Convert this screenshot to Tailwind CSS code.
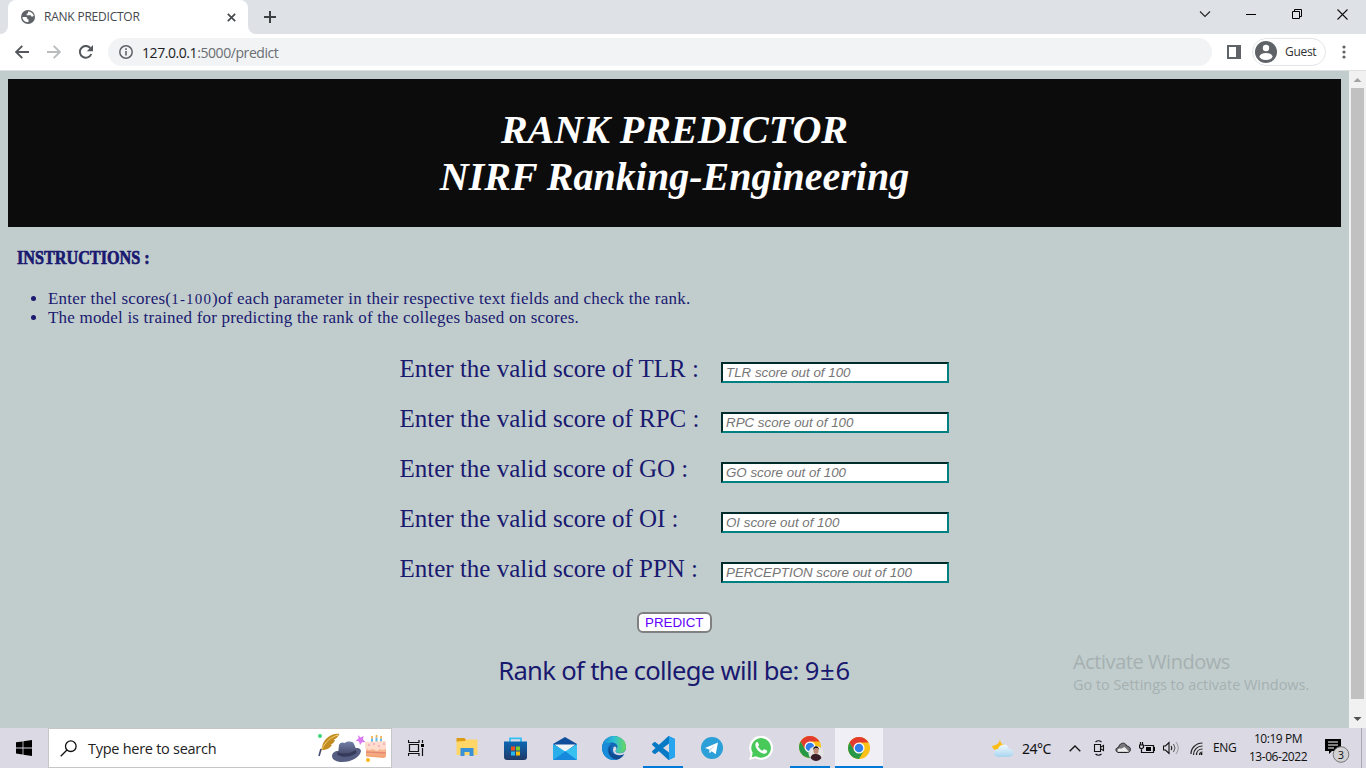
<!DOCTYPE html>
<html lang="en">
<head>
<meta charset="utf-8">
<title>RANK PREDICTOR</title>
<script src="https://cdn.jsdelivr.net/npm/@tailwindcss/browser@4"></script>
</head>
<body class="w-[1366px] h-[768px] overflow-hidden flex flex-col bg-[#c1cdcd] font-['Open_Sans','Noto_Sans',sans-serif] whitespace-nowrap">

<!-- Tab strip -->
<header class="h-[34px] bg-[#dee1e6] flex shrink-0">
  <div class="w-2 bg-white"><div class="size-full bg-[#dee1e6] rounded-br-lg"></div></div>
  <div class="w-[240px] bg-white rounded-t-lg flex items-center pl-[13px] pr-[12px]">
    <svg class="size-[14px] shrink-0" viewBox="0 0 14 14"><circle cx="7" cy="7" r="7" fill="#5f6368"/><path d="M1.500 7h3c1 0 1.800.7 1.800 1.600v.7h1.200v2.800C4 12.500 1.300 10 1.500 7Z M7 1.500v1c0 .9-.7 1.400-1.400 1.400v1.300h3.600c.8 0 1 .5 1 1.300h1.200c.9 0 1.300-.5 1.300-1C12.200 3.300 9.800 1.500 7 1.500Z M7 6.200h2.400" fill="#fff"/></svg>
    <span class="ml-[9px] text-[12px] tracking-[-0.22px] text-[#45494d]">RANK PREDICTOR</span>
    <svg class="size-[9px] ml-auto" viewBox="0 0 9 9"><path d="M.8.8l7.400 7.400M8.200.8L.8 8.200" stroke="#45494d" stroke-width="1.700"/></svg>
  </div>
  <div class="w-2 bg-white"><div class="size-full bg-[#dee1e6] rounded-bl-lg"></div></div>
  <svg class="w-3 h-3 ml-[8px] mt-[11px]" viewBox="0 0 12 12"><path d="M6 0v12M0 6h12" stroke="#3c4043" stroke-width="2"/></svg>
  <div class="ml-auto flex items-center pb-[6px] pr-[18px]">
    <svg class="w-[12px] h-[8px]" viewBox="0 0 12 8"><path d="M1 1.500l5 5 5-5" fill="none" stroke="#222" stroke-width="1.100"/></svg>
    <div class="w-[10px] h-px bg-black ml-[35px] mt-[1px]"></div>
    <svg class="size-[11px] ml-[36px]" viewBox="0 0 11 11"><path d="M.5 2.500h7v7h-7zM2.500 2.500v-2h7v7h-2" fill="none" stroke="#000"/></svg>
    <svg class="size-[11px] ml-[34px]" viewBox="0 0 11 11"><path d="M.5.5l10 10M10.500.5l-10 10" stroke="#111" stroke-width="1.100"/></svg>
  </div>
</header>

<!-- Toolbar -->
<div class="h-[37px] bg-white border-b border-[#dcdedf] flex items-center shrink-0 pl-[15px] pr-[20px]">
  <svg class="w-[14px] h-[14px]" viewBox="0 0 14 14"><path d="M14 7H1.500M7.300.8L1.100 7l6.200 6.200" fill="none" stroke="#54585d" stroke-width="1.900"/></svg>
  <svg class="w-[14px] h-[14px] ml-[18px]" viewBox="0 0 14 14"><path d="M0 7h12.500M6.700.8L12.900 7l-6.200 6.200" fill="none" stroke="#babcbe" stroke-width="1.900"/></svg>
  <svg class="size-[14px] ml-[18px]" viewBox="0 0 14 14"><path d="M12.300 9A5.900 5.900 0 1 1 11.300 3" fill="none" stroke="#54585d" stroke-width="2"/><path d="M14 0v6.200H7.800z" fill="#54585d"/></svg>
  <div class="ml-[15px] w-[1104px] h-7 rounded-full bg-[#f1f3f4] flex items-center pl-[11px]">
    <svg class="size-[14px]" viewBox="0 0 14 14"><circle cx="7" cy="7" r="6.200" fill="none" stroke="#5f6368" stroke-width="1.500"/><path d="M6.200 6h1.600v4.500H6.200zM6.200 3.300h1.600v1.600H6.200z" fill="#5f6368"/></svg>
    <span class="ml-[9px] text-[14px] tracking-[-0.43px] text-[#6a6e73]"><span class="text-[#202124]">127.0.0.1</span>:5000/predict</span>
  </div>
  <svg class="w-[14px] h-[14px] ml-[15px]" viewBox="0 0 14 14"><path fill-rule="evenodd" d="M0 0h14v14H0zM2 2v10h7V2z" fill="#5f6368"/></svg>
  <div class="ml-[11px] w-[74px] h-7 rounded-full border border-[#e2e4e7] flex items-center pl-[2px]">
    <svg class="size-[22px]" viewBox="0 0 22 22"><circle cx="11" cy="11" r="11" fill="#5f6368"/><circle cx="11" cy="7" r="3.200" fill="#fff"/><ellipse cx="11" cy="15.500" rx="6.500" ry="3.500" fill="#fff"/></svg>
    <span class="ml-[8px] text-[12px] tracking-[-0.3px] text-[#303134]">Guest</span>
  </div>
  <svg class="w-[4px] h-[14px] ml-auto" viewBox="0 0 4 14"><g fill="#5f6368"><circle cx="2" cy="2" r="1.600"/><circle cx="2" cy="7" r="1.600"/><circle cx="2" cy="12" r="1.600"/></g></svg>
</div>

<!-- Page and scrollbar -->
<div class="h-[657px] flex shrink-0">
  <main class="w-[1349px] pt-2 px-2 text-[#191970] relative">
    <h1 class="h-[148px] bg-[#0c0c0c] text-white text-center font-['Liberation_Serif',serif] font-bold italic text-[40px] leading-[47px] pt-[27px]">RANK PREDICTOR<br>NIRF Ranking-Engineering</h1>
    <h3 class="mt-[19px] ml-[9px] h-[25px] leading-[24px] font-['Liberation_Serif',serif] font-bold text-[19.500px] origin-left scale-x-[0.83] [-webkit-text-stroke:0.7px_#191970]">INSTRUCTIONS :</h3>
    <ul class="mt-[18px] pl-[40px] list-disc font-['Liberation_Serif',serif] text-[17px] leading-[19px]">
      <li class="tracking-[0.24px]">Enter thel scores(<span class="text-[15px] tracking-[1.150px]">1-100</span>)of each parameter in their respective text fields and check the rank.</li>
      <li class="tracking-[0.2px] -mt-px">The model is trained for predicting the rank of the colleges based on scores.</li>
    </ul>
    <form class="mt-[17px] ml-[391.500px] w-[549.500px] font-['Liberation_Serif',serif] text-[25px]">
      <div class="h-[50px] flex justify-between"><label class="leading-[50px]">Enter the valid score of TLR :</label><input class="mt-[18px] w-[228px] h-[21px] bg-white border-2 [border-style:inset] border-[#008080] px-[3px] font-['Liberation_Sans',sans-serif] italic text-[13.333px] placeholder:text-[#757575]" placeholder="TLR score out of 100"></div>
      <div class="h-[50px] flex justify-between"><label class="leading-[50px]">Enter the valid score of RPC :</label><input class="mt-[18px] w-[228px] h-[21px] bg-white border-2 [border-style:inset] border-[#008080] px-[3px] font-['Liberation_Sans',sans-serif] italic text-[13.333px] placeholder:text-[#757575]" placeholder="RPC score out of 100"></div>
      <div class="h-[50px] flex justify-between"><label class="leading-[50px]">Enter the valid score of GO :</label><input class="mt-[18px] w-[228px] h-[21px] bg-white border-2 [border-style:inset] border-[#008080] px-[3px] font-['Liberation_Sans',sans-serif] italic text-[13.333px] placeholder:text-[#757575]" placeholder="GO score out of 100"></div>
      <div class="h-[50px] flex justify-between"><label class="leading-[50px]">Enter the valid score of OI :</label><input class="mt-[18px] w-[228px] h-[21px] bg-white border-2 [border-style:inset] border-[#008080] px-[3px] font-['Liberation_Sans',sans-serif] italic text-[13.333px] placeholder:text-[#757575]" placeholder="OI score out of 100"></div>
      <div class="h-[50px] flex justify-between"><label class="leading-[50px]">Enter the valid score of PPN :</label><input class="mt-[18px] w-[228px] h-[21px] bg-white border-2 [border-style:inset] border-[#008080] px-[3px] font-['Liberation_Sans',sans-serif] italic text-[13.333px] placeholder:text-[#757575]" placeholder="PERCEPTION score out of 100"></div>
      <div class="h-[50px] flex justify-center pt-[18px]"><button type="button" class="w-[75px] h-[21px] border-2 border-[#808080] rounded-[6px] bg-white text-[#6200ff] font-['Liberation_Sans',sans-serif] text-[13.333px] leading-[17px]">PREDICT</button></div>
    </form>
    <p class="mt-[9px] text-center font-['Noto_Sans',sans-serif] text-[25.600px] leading-[36px] tracking-[-0.67px]">Rank of the college will be: <span class="tracking-[0.7px]">9±6</span></p>
    <div class="absolute left-[1073px] top-[578px] text-[#a6b0b1]">
      <div class="text-[20px] leading-[26px] tracking-[-0.45px]">Activate Windows</div>
      <div class="text-[14.500px] leading-[20px] tracking-[-0.040px]">Go to Settings to activate Windows.</div>
    </div>
  </main>
  <div class="w-[17px] bg-[#f1f1f1] flex flex-col items-center">
    <svg class="w-[17px] h-[17px]" viewBox="0 0 17 17"><path d="M4.500 11h8l-4-4z" fill="#a3a3a3"/></svg>
    <div class="w-[13px] h-[611px] bg-[#c1c1c1]"></div>
    <svg class="w-[17px] h-[17px] mt-auto" viewBox="0 0 17 17"><path d="M4.500 6h8l-4 4z" fill="#505050"/></svg>
  </div>
</div>

<!-- Taskbar -->
<footer class="h-10 bg-[#dad9e4] flex shrink-0 text-[#111]">
  <div class="w-12 flex items-center justify-center"><svg class="size-4" viewBox="0 0 16 16"><path d="M0 2.300l6.600-.9v6H0zM7.400 1.300L16 0v7.400H7.400zM0 8.400h6.600v6L0 13.600zM7.400 8.400H16V16l-8.600-1.300z"/></svg></div>
  <div class="w-[344px] bg-white border border-[#c6c6c8] flex items-center pl-[11px]">
    <svg class="w-[17px] h-[17px]" viewBox="0 0 17 17"><circle cx="10.800" cy="6.200" r="5.300" fill="none" stroke="#111" stroke-width="1.300"/><path d="M7 10L.7 16.300" stroke="#111" stroke-width="1.300"/></svg>
    <span class="ml-[11px] mt-[2px] text-[14.500px] tracking-[-0.27px] text-[#222]">Type here to search</span>
    <svg class="w-[70px] h-[32px] ml-auto mr-[4px] mb-px" viewBox="317 732 70 32">
      <defs><linearGradient id="hat" x2="0" y2="1"><stop stop-color="#7480a8"/><stop offset="1" stop-color="#424665"/></linearGradient><linearGradient id="cake" x2="0" y2="1"><stop stop-color="#ffd2ba"/><stop offset="1" stop-color="#f1a06f"/></linearGradient></defs>
      <circle cx="320" cy="736" r="2" fill="#3fd47c"/>
      <path d="M339.500 734c-7-1-14 3-17 11l-1.500 5c6 0 9-2 11-5l-1.500-.3c3-1 4-3 4.500-4.700l-1.500-.3c3-1.200 4.500-3 6-5.700z" fill="#c28c20"/><path d="M338 735c-7 2-13 7-16 14l-2.500 5" fill="none" stroke="#f4d574"/><path d="M321 749l-2 7" stroke="#454b78" stroke-width="1.600"/>
      <path d="M332 756c0-3 3-5 6-5l18-3c3-.5 5 1 5 3-1 6-9 11-19 11-6 0-10-2.500-10-6z" fill="#565d82"/><path d="M338 754l1-9c1-3 4-3 6-2 2-2 8-2 9 1l3 7c-3 4-12 6-19 3z" fill="url(#hat)"/><path d="M337.500 752c6 3 13 1.500 18-2l1 3c-5 4-13 5-19 2z" fill="#363b5c"/>
      <path d="M358 735l2.500 2.500 3-1.500-.5 3.500 2.500 2.500-3.500.2-2 2.800-1-3.500-3.500-1 3-1.700z" fill="#d978ef"/>
      <path d="M372 738.500v4M376.500 737.500v5M381 738.500v4" stroke="#64bae8" stroke-width="2"/><path d="M372 736v2.500M376.500 735v2.500M381 736v2.500" stroke="#f2a83b" stroke-width="1.600"/>
      <path d="M366 742.500l20-1v15l-2 1.500-18-1.500z" fill="url(#cake)"/><path d="M365 742l21-1v8l-3 1-3-1-3 2-4-2-4 1-4-2z" fill="#ffdccb"/><path d="M366 752l20 1" stroke="#e58a72" stroke-width="1.500"/><g fill="#df6fb0"><circle cx="369" cy="745" r=".7"/><circle cx="374" cy="744" r=".7"/><circle cx="379" cy="746" r=".7"/><circle cx="384" cy="744" r=".7"/></g>
      <circle cx="368" cy="760" r="2" fill="#f8b818"/>
    </svg>
  </div>
  <div class="w-[48px] flex items-center justify-center pb-px"><svg class="w-[17px] h-[16px]" viewBox="0 0 17 16"><path d="M.5 0v2.500h10.500V0M.5 16v-2.500h10.500V16M1.500 4.500h9v7h-9zM14.500 0v3M14.500 8v8" fill="none" stroke="#111" stroke-width="1.200"/><path d="M13 4h3v3h-3z"/></svg></div>

  <!-- Pinned apps -->
  <div class="w-[53px] flex items-center justify-center pb-px"><svg class="w-[22px] h-[19px]" viewBox="0 0 22 19"><path d="M.5 0h8l1.500 2v2H.5z" fill="#de9c16"/><path d="M.5 3.500L9 3l1.500-1.500H21.500v15.500H.5z" fill="#ffd667"/><path d="M4.500 18v-8h13v8h-4v-4h-5v4z" fill="#3b91d8"/></svg></div>
  <div class="w-[45px] flex items-center justify-center"><svg class="w-[23px] h-[23px]" viewBox="0 0 23 23"><defs><linearGradient id="bag" x2="0" y2="1"><stop stop-color="#0b67b4"/><stop offset="1" stop-color="#203a67"/></linearGradient></defs><path d="M6 5V1.300h11V5" fill="none" stroke="#32c0f3" stroke-width="1.800"/><path d="M0 4.500h23V20q0 3-3 3H3q-3 0-3-3z" fill="url(#bag)"/><path d="M7 9.500h4v4H7z" fill="#f1511b"/><path d="M12 9.500h4v4h-4z" fill="#80cc28"/><path d="M7 14.500h4v4H7z" fill="#29b6ed"/><path d="M12 14.500h4v4h-4z" fill="#fbbc09"/></svg></div>
  <div class="w-[53px] flex items-center justify-center"><svg class="w-[24px] h-[23px]" viewBox="0 0 24 23"><path d="M0 7L12 0l12 7v5H0z" fill="#104e9c"/><path d="M1.500 7.500h21L12 15z" fill="#f2f4f7"/><path d="M0 7l12 7.500L24 7v16H0z" fill="#38c0f1"/><path d="M0 23l12-9 12 9z" fill="#1689dc"/><path d="M0 7l12 7.500L0 23z" fill="#28aee9"/></svg></div>
  <div class="w-[46px] flex items-center justify-center"><svg class="size-6" viewBox="0 0 24 24"><defs><linearGradient id="edge"><stop stop-color="#1787d5"/><stop offset=".5" stop-color="#2ebfd5"/><stop offset="1" stop-color="#68d85a"/></linearGradient></defs><circle cx="12" cy="12" r="12" fill="#1267b8"/><path d="M0 11C1 4 6 0 12 0c7 0 12 5 12 11 0 4-3 6-6 6-4 0-5-2-4-3 4-4-1-9-6-7-4 0-7 2-8 4z" fill="url(#edge)"/><path d="M0 11c2-4 6-5 9-3-3 2-4 5-3 8 1 4 5 7 9 7.500C6 26 0 19 0 11z" fill="#188cd9"/><path d="M9 9c-3 7 3 13 13 9-2 3-4 5-7 5.500C7 23 4 14 9 9z" fill="#104c91"/><path d="M14 14c-2 2 2 4 6 3 2-.5 3.500-2 4-4v5l-2 .2c-6 2.500-11 0-11-4.200 0-2 1-4 2-3.500 1.500.5 2 2 1 3.500z" fill="#dad9e4"/></svg></div>
  <div class="w-[50px] flex items-center justify-center relative"><svg class="size-6 ml-px" viewBox="0 0 24 24"><path d="M17.500 0L24 3v18l-6.500 3L1.500 9.200c-.6-.6-.6-1.200 0-1.700L3 6.200c.5-.4 1-.4 1.500 0L18 16.500V7.500L4.500 17.800c-.5.4-1 .4-1.500 0l-1.500-1.300c-.6-.5-.6-1.200 0-1.700z" fill="#0879c4"/><path d="M17.500 0L24 3v18l-6.500 3c.4-.3.5-.8.500-1.500V1.500c0-.7 0-1.200-.5-1.500z" fill="#27a5ef"/></svg><div class="absolute bottom-0 left-[6px] w-[40px] h-[2px] bg-[#0078d7]"></div></div>
  <div class="w-[49px] flex items-center justify-center"><svg class="size-[22px]" viewBox="0 0 22 22"><circle cx="11" cy="11" r="11" fill="#2a9fd8"/><path d="M4 11l13-5.500-2.300 11.800-4-3-2 1.900-.5-3.600z" fill="#fff"/><path d="M8.200 12.600L15 7.500l-5.500 6-.8 2.700z" fill="#bfddec"/></svg></div>
  <div class="w-[50px] flex items-center justify-center"><svg class="size-6" viewBox="0 0 24 24"><path d="M0 24l1.700-6.300A12 12 0 1 1 6.400 22.300z" fill="#fff"/><path d="M2.700 21.300l1-4.300a9.800 9.800 0 1 1 3.300 3.300z" fill="#4ac95b"/><path d="M7 6.500c.5-.6 1.700-.8 2 0l1 2.300c.2.600-.6 1.400-1 1.800 1 2 2.300 3.200 4.500 4.200.6-.4 1.300-1.700 1.900-1.500l2.400 1.200c.9.500 0 2.200-.8 2.700C12.500 19.700 4 11.500 7 6.500z" fill="#fff"/></svg></div>
  <div class="w-[49px] flex items-center justify-center relative"><svg class="w-[26px] h-[26px] ml-px" viewBox="0 0 26 26"><g id="chrome"><circle cx="12" cy="12" r="11" fill="#fbc116"/><path d="M2.500 6.500A11 11 0 0 1 21.500 6.500H12L7.200 14.700z" fill="#e33b2e"/><path d="M2.500 6.500A11 11 0 0 0 12 23l4.800-8.200H7.200z" fill="#279847"/><circle cx="12" cy="12" r="5.500" fill="#fff"/><circle cx="12" cy="12" r="4.300" fill="#317de9"/></g><circle cx="18" cy="18.500" r="7.500" fill="#e4e5e3"/><path d="M12.500 23c1-4 3-4 5.500-4s4.500 1 5.500 4c-3 4-8 4-11 0z" fill="#3a1c29"/><ellipse cx="18" cy="15.800" rx="2.500" ry="3.300" fill="#c18d78"/><path d="M15.300 15c-.5-5 6-5 5.500 0l-1-2h-3z" fill="#171317"/></svg><div class="absolute bottom-0 left-[4px] w-[40px] h-[2px] bg-[#0078d7]"></div></div>
  <div class="w-[48px] bg-[#efeff5] flex items-center justify-center relative"><svg class="size-6" viewBox="0 0 24 24"><use href="#chrome"/></svg><div class="absolute bottom-0 left-0 w-full h-[2px] bg-[#0078d7]"></div></div>

  <!-- Notification area -->
  <div class="ml-auto flex items-center">
    <svg class="w-[22px] h-[20px]" viewBox="0 0 22 20"><defs><linearGradient id="cloud" x2="0" y2="1"><stop stop-color="#f2faff"/><stop offset="1" stop-color="#a8d4ef"/></linearGradient></defs><path d="M8 0c0 4-2 7-8 8 1 6 12 7 13-1C9 6 8 4 8 0z" fill="#fbbd19"/><path d="M6 19c-6-1-5-8 0-8 2-6 10-6 11 0 6-1 6 8 0 8z" fill="url(#cloud)"/></svg>
    <span class="ml-[8px] mt-px font-['Noto_Sans'] text-[14px] tracking-[-0.5px] w-[32px]">24°C</span>
    <svg class="w-[12px] h-[7px] ml-[15px]" viewBox="0 0 12 7"><path d="M.7 6.300L6 1l5.300 5.300" fill="none" stroke="#111" stroke-width="1.300"/></svg>
    <svg class="w-[12px] h-[16px] ml-[12px]" viewBox="0 0 12 16"><path d="M1.500 4.500h6v7h-6zM8 7l2.500-1.500v5L8 9M2.500 2Q5.500-.5 8.500 2M2.500 14q3 2.500 6 0" fill="none" stroke="#111" stroke-width="1.100"/></svg>
    <svg class="w-[16px] h-[12px] ml-[10px]" viewBox="0 0 16 12"><path d="M4 10.500C0 10.500 0 5.500 3.500 5.500 4.500 0 11 0 11.500 4c5 0 5 6.500 1 6.500z" fill="#77777b" stroke="#222"/><path d="M3 9.800C1.500 8 4 6 6 6.800L9.500 5l4.500 4.800z" fill="#eee"/></svg>
    <svg class="w-[16px] h-[12px] ml-[8px]" viewBox="0 0 16 12"><path d="M5.500 3.500h9v7h-8M3.500 0v3M1.500 0v3M.5 3h4v2.500L2.500 7 .5 5.500zM2.500 7v3.500h4" fill="none" stroke="#111" stroke-width="1.200"/><path d="M7 5h5v4H7zM15 5h1v4h-1z"/></svg>
    <svg class="w-[17px] h-[14px] ml-[8px]" viewBox="0 0 17 14"><path d="M.5 5h2L6 1.500v11L2.500 9h-2zM8 5q1.500 2 0 4" fill="none" stroke="#111" stroke-width="1.100"/><path d="M10.500 3q3 4 0 8" fill="none" stroke="#555"/><path d="M13 1q4.500 6 0 12" fill="none" stroke="#999"/></svg>
    <svg class="w-[13px] h-[13px] ml-[10px]" viewBox="0 0 13 13"><path d="M1 12C1 6 6 1 12.500 1M3.500 13C3.500 8 7 4 12.500 4M6.500 13c0-3 2-6 6-6M9.500 13c0-2 1-3 3-3" fill="none" stroke="#222" stroke-width="1.200"/><circle cx="11.500" cy="12" r="1"/></svg>
    <span class="ml-[10px] text-[12px] tracking-[-0.4px] w-[25px]">ENG</span>
    <div class="ml-[8px] w-[64px] text-center text-[12px] leading-[18px] tracking-[-0.45px]">10:19 PM<br>13-06-2022</div>
    <div class="ml-[14px] w-[26px] h-[26px] relative mt-[6px]"><svg class="size-[26px]" viewBox="0 0 26 26"><path d="M1 1h16v12H8l-3 3v-3H1z"/><path d="M4 4h10M4 7h10M4 10h6" stroke="#fff"/><circle cx="17" cy="16.500" r="7.800" fill="#d2d2d5" stroke="#777"/></svg><span class="absolute left-[9px] top-[9px] w-4 text-center text-[11px] leading-[15px]">3</span></div>
    <div class="ml-[11px] mr-[4px] w-px h-10 bg-[#aaaab2]"></div>
  </div>
</footer>
</body>
</html>
